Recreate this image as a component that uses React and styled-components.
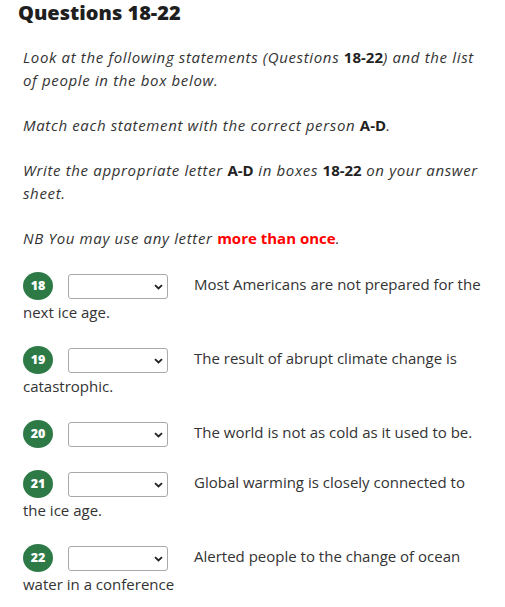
import React from "react";
import styled, { createGlobalStyle } from "styled-components";

const Global = createGlobalStyle`
  html, body { margin: 0; padding: 0; background: #fff; }
  body { font-family: "Open Sans", "Noto Sans", sans-serif; color: #333; }
`;

const Page = styled.div`
  width: 505px;
`;

const Heading = styled.h2`
  margin: 0;
  padding: 0 18px;
  font-size: 20px;
  line-height: 26px;
  font-weight: 800;
  color: #1f1f1f;
`;

const Body = styled.div`
  padding: 0 17px 0 23px;
  margin-top: 20px;
`;

const Para = styled.p`
  margin: 0 0 22px;
  font-size: 15px;
  line-height: 23px;
  font-style: italic;
  letter-spacing: 0.65px;
`;

const B = styled.b`
  font-weight: 700;
  font-style: normal;
  letter-spacing: 0;
  color: #222;
`;

const Red = styled.b`
  font-weight: 700;
  font-style: normal;
  letter-spacing: 0;
  color: #f00;
`;

const Row = styled.div`
  font-size: 15px;
  line-height: 24px;
  margin-bottom: 22px;
  &:last-child { margin-bottom: 0; }
`;

const Badge = styled.span`
  display: inline-block;
  vertical-align: middle;
  width: 30px;
  height: 28px;
  border-radius: 50%;
  background: #2e7a47;
  color: #fff;
  font-size: 12.5px;
  font-weight: 800;
  line-height: 28px;
  text-align: center;
  margin-right: 15px;
`;

const SelectWrap = styled.span`
  position: relative;
  display: inline-block;
  vertical-align: middle;
  width: 100px;
  height: 25px;
  margin-right: 26px;
`;

const Select = styled.select`
  appearance: none;
  -webkit-appearance: none;
  width: 100px;
  height: 25px;
  box-sizing: border-box;
  border: 1px solid #a9a9a9;
  border-radius: 3px;
  background: #fff;
  display: block;
  margin: 0;
`;

const Chevron = styled.svg`
  position: absolute;
  right: 5px;
  top: 10px;
  width: 9px;
  height: 6px;
  pointer-events: none;
`;

function Question({ n, text }) {
  return (
    <Row>
      <Badge>{n}</Badge>
      <SelectWrap>
        <Select defaultValue="">
          <option value=""></option>
          <option>A</option>
          <option>B</option>
          <option>C</option>
          <option>D</option>
        </Select>
        <Chevron viewBox="0 0 9 6">
          <path d="M1 1.2l3.5 3.3L8 1.2" fill="none" stroke="#222" strokeWidth="1.8" />
        </Chevron>
      </SelectWrap>
      {text}
    </Row>
  );
}

const questions = [
  [18, "Most Americans are not prepared for the next ice age."],
  [19, "The result of abrupt climate change is catastrophic."],
  [20, "The world is not as cold as it used to be."],
  [21, "Global warming is closely connected to the ice age."],
  [22, "Alerted people to the change of ocean water in a conference"],
];

export default function App() {
  return (
    <Page>
      <Global />
      <Heading>Questions 18-22</Heading>
      <Body>
        <Para>
          Look at the following statements (Questions <B>18-22</B>) and the list of people in the box below.
        </Para>
        <Para>
          Match each statement with the correct person <B>A-D</B>.
        </Para>
        <Para>
          Write the appropriate letter <B>A-D</B> in boxes <B>18-22</B> on your answer sheet.
        </Para>
        <Para>
          NB You may use any letter <Red>more than once</Red>.
        </Para>
        {questions.map(([n, t]) => (
          <Question key={n} n={n} text={t} />
        ))}
      </Body>
    </Page>
  );
}
